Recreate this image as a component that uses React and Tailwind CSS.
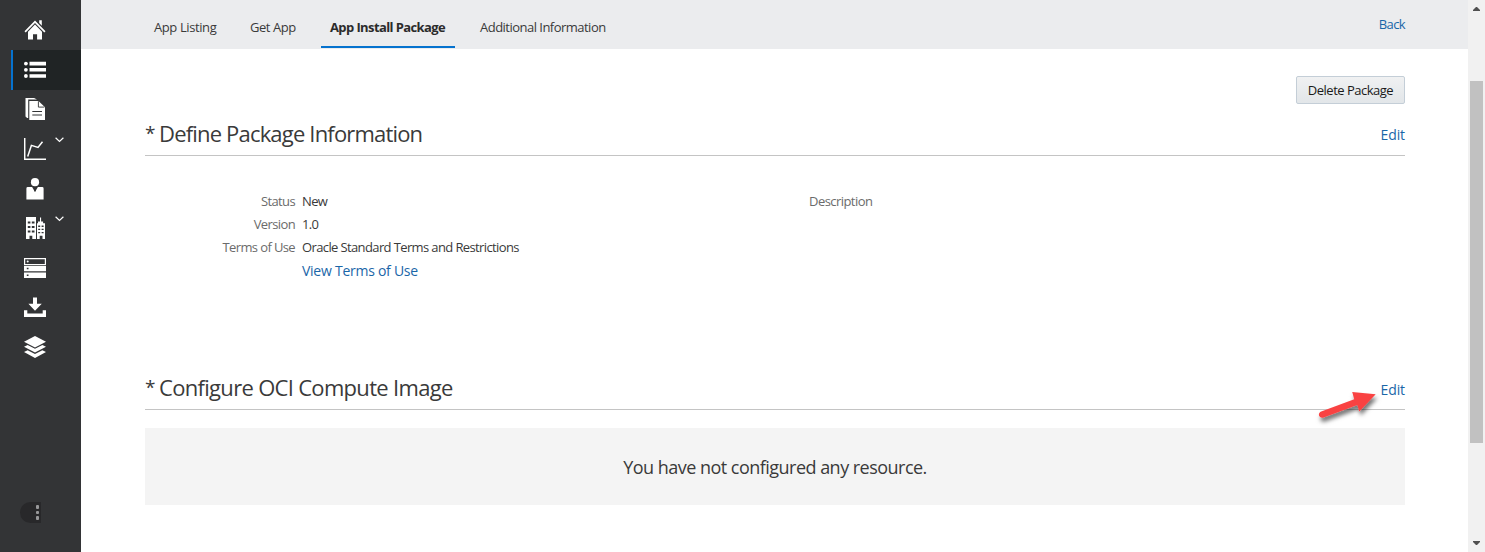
const HomeIcon = () => (
  <svg width="22" height="22" viewBox="0 0 22 22" fill="#fff">
    <path d="M11 1.5 21.5 12.3 20.3 13.4 11 4 1.7 13.4.5 12.3zM15.2 1.3h2.6v5.4l-2.6-2.6z" />
    <path d="M4 12.7 11 5.6l7 7.1V20.5h-4.9v-5.2H9v5.2H4z" />
  </svg>
);

const ListIcon = () => (
  <svg width="22" height="22" viewBox="0 0 22 22" fill="#fff">
    <circle cx="1.9" cy="4.6" r="1.9" /><circle cx="1.9" cy="10.8" r="1.9" /><circle cx="1.9" cy="17" r="1.9" />
    <path d="M5.5 2.8H22v3.6H5.5zM5.5 9H22v3.6H5.5zM5.5 15.2H22v3.6H5.5z" />
  </svg>
);

const DocsIcon = () => (
  <svg width="22" height="22" viewBox="0 0 22 22">
    <path d="M1.5 0h8.6L13 1.6H4.2V20H3.1L1.5 18.6z" fill="#fff" />
    <path d="M5.3 3h9.2l6.5 6.2V22H5.3z" fill="#fff" />
    <path d="M14.4 3.2v5.9h6" fill="none" stroke="#333436" strokeWidth=".9" />
    <path d="M8.3 13.5H18M8.3 17H18" stroke="#333436" strokeWidth="1" />
  </svg>
);

const ChartIcon = () => (
  <svg width="22" height="22" viewBox="0 0 22 22" fill="none" stroke="#fff">
    <path d="M.7 0v21.2H22" strokeWidth="1.5" />
    <path d="m3.7 18.4 3.7-11L14 9.5l4.5-5.8" strokeWidth="1.5" />
  </svg>
);

const PersonIcon = () => (
  <svg width="22" height="22" viewBox="0 0 22 22" fill="#fff">
    <circle cx="11" cy="4.2" r="4.1" />
    <path d="M3.8 9h4.3L11 14l2.9-5h4.3q1.4 0 1.4 1.4V21.4H2.4V10.4Q2.4 9 3.8 9z" />
    <path d="M10.1 9h1.8l-.5 1.2.5 2.3-.9 1.2-.9-1.2.5-2.3z" fill="#333436" />
  </svg>
);

const BuildingIcon = () => (
  <svg width="22" height="22" viewBox="0 0 22 22" fill="#fff">
    <path d="M2 0h10v22H8.3v-3.2H5.5V22H2z" />
    <path d="M13 6.3h1V4.5h2V.5h1.1v4h2v1.8H21V22h-2.5v-3.2h-2.8V22H13z" />
    <path d="M3.8 4.4h2.6v2H3.8zm4 0h2.7v2H7.8zm-4 4.6h2.6v2H3.8zm4 0h2.7v2H7.8zm-4 4.5h2.6v2H3.8zm4 0h2.7v2H7.8zM14.2 8.6h2v1.3h-2zm3.4 0h2v1.3h-2zm-3.4 3.2h2v1.3h-2zm3.4 0h2v1.3h-2zm-3.4 3.2h2v1.3h-2zm3.4 0h2v1.3h-2z" fill="#333436" />
  </svg>
);

const ServerIcon = () => (
  <svg width="22" height="22" viewBox="0 0 22 22" fill="#fff">
    <path d="M.6 1.6h20.8v5.9H.6z" fill="none" stroke="#fff" strokeWidth="1.2" />
    <path d="M0 8.8h22v5.4H0zM0 15.4h22V21H0z" />
    <circle cx="3.7" cy="4.6" r="1" />
    <path d="M2.8 10.8h1.7v1.5H2.8zm0 6.6h1.7v1.5H2.8z" fill="#333436" />
  </svg>
);

const DownloadIcon = () => (
  <svg width="22" height="22" viewBox="0 0 22 22" fill="#fff">
    <path d="M9 1.5h4v6.3h4.8L11 14.7 4.4 7.8H9z" />
    <path d="M0 14.3h3.3v3.2h15.4v-3.2H22v6.6H0z" />
  </svg>
);

const LayersIcon = () => (
  <svg width="22" height="22" viewBox="0 0 22 22" fill="#fff">
    <path d="m11 0 11 5.7-11 5.7L0 5.7z" />
    <path d="m0 10.7 3.6-1.8 7.4 3.8 7.4-3.8 3.6 1.8-11 5.8z" />
    <path d="m0 16 3.6-1.8L11 18l7.4-3.8L22 16l-11 5.9z" />
  </svg>
);

const NAV = [
  { icon: HomeIcon },
  { icon: ListIcon, active: true },
  { icon: DocsIcon },
  { icon: ChartIcon, menu: true },
  { icon: PersonIcon },
  { icon: BuildingIcon, menu: true },
  { icon: ServerIcon },
  { icon: DownloadIcon },
  { icon: LayersIcon },
];

function Sidebar() {
  return (
    <nav className="flex w-[81px] shrink-0 flex-col bg-[#333436] pt-[10px]">
      {NAV.map(({ icon: Icon, active, menu }, i) => (
        <div
          key={i}
          className={
            active
              ? "ml-[11px] flex h-10 items-center border-l-2 border-[#0572ce] bg-[#202425] pl-[11px]"
              : "ml-[11px] flex h-[39.6px] items-center pl-[13px]"
          }
        >
          <Icon />
          {menu && (
            <svg className="mb-[18px] ml-[8.5px]" width="9" height="6" viewBox="0 0 9 6" fill="none" stroke="#fff" strokeWidth="1.2">
              <path d="m.6.8 3.9 3.6L8.4.8" />
            </svg>
          )}
        </div>
      ))}
      <div className="mt-auto mb-[29px] ml-5 flex h-[21px] w-[21px] flex-col items-end justify-center gap-[2px] rounded-l-full bg-[#28282a] pr-[2px]">
        <span className="size-[3.5px] rounded-[1px] bg-[#98989a]" />
        <span className="size-[3.5px] rounded-[1px] bg-[#98989a]" />
        <span className="size-[3.5px] rounded-[1px] bg-[#98989a]" />
      </div>
    </nav>
  );
}

function Header() {
  return (
    <header className="flex h-[49px] items-start bg-[#ebecee] pr-[63px] pl-[64px] text-[13px] leading-5 text-[#3a3a3a]">
      <div className="flex h-12 pt-[17px]">
        <span className="ml-[9px] w-24 whitespace-nowrap tracking-[-0.4px]">App Listing</span>
        <span className="w-[71px] whitespace-nowrap tracking-[-0.45px]">Get App</span>
        <span className="h-[31px] w-[134px] border-b-2 border-[#0572ce] pl-[9px] font-bold whitespace-nowrap tracking-[-0.6px] text-[#2b2b2b]">App Install Package</span>
        <span className="ml-[25px] whitespace-nowrap tracking-[-0.52px]">Additional Information</span>
      </div>
      <a className="mt-[14px] ml-auto tracking-[-0.6px] text-[#1a66a8]">Back</a>
    </header>
  );
}

function SectionHeader({ title, titleClass, linkClass }) {
  return (
    <div className="flex h-[42px] items-start justify-between border-b border-[#c4c4c4]">
      <h2 className="flex gap-[6px] text-[22px] leading-[38px] text-[#3a3a3a]">
        <span className="w-[8px] text-[19px]">*</span>
        <span className={titleClass}>{title}</span>
      </h2>
      <a className={linkClass}>Edit</a>
    </div>
  );
}

function Field({ label, children }) {
  return (
    <div className="flex h-[23px] gap-[7px] text-[13px] leading-[23px] tracking-[-0.62px]">
      <span className="w-[150px] text-right text-[#6b6b6b]">{label}</span>
      <span className="whitespace-nowrap text-[#3a3a3a]">{children}</span>
    </div>
  );
}

function Arrow() {
  return (
    <svg className="absolute top-[386px] left-[1312px]" width="72" height="44" viewBox="0 0 72 44">
      <defs>
        <filter id="shadow" x="-20%" y="-20%" width="150%" height="170%">
          <feDropShadow dx="1.5" dy="4" stdDeviation="2" floodColor="#000" floodOpacity=".55" />
        </filter>
      </defs>
      <path d="m9.2 25.6 33-12.3-2-7.3 23.5 2.3-16.4 17.2-2-6.6-34.4 12.8c-4.7.5-5.2-5-1.7-6.1z" fill="#f94343" filter="url(#shadow)" />
    </svg>
  );
}

function Scrollbar() {
  return (
    <div className="flex w-[17px] shrink-0 flex-col items-center bg-[#f1f1f1]">
      <svg className="mt-[7px]" width="7" height="4" fill="#505050"><path d="M3 0h1l3 3v1H0V3z" /></svg>
      <div className="mt-[70px] h-[362px] w-[13px] bg-[#c1c1c1]" />
      <svg className="mt-auto mb-[7px]" width="7" height="4" fill="#505050"><path d="M0 0h7v1L4 4H3L0 1z" /></svg>
    </div>
  );
}

export default function App() {
  return (
    <div className="relative flex h-[552px] w-[1485px] overflow-hidden bg-white font-['Open_Sans',sans-serif]">
      <Sidebar />
      <main className="min-w-0 flex-1">
        <Header />
        <div className="flex flex-col pr-[63px] pl-[64px]">
          <button className="mt-[27px] mb-[10px] h-7 w-[109px] self-end rounded-[2px] border border-[#c4ced7] bg-linear-to-b from-[#f0f1f2] to-[#e2e6e9] pt-px text-[13px] tracking-[-0.5px] whitespace-nowrap text-[#1a1a1a]">
            Delete Package
          </button>
          <SectionHeader
            title="Define Package Information"
            titleClass="whitespace-nowrap tracking-[-0.82px]"
            linkClass="pt-[11px] text-sm leading-5 tracking-[-0.1px] text-[#1a66a8]"
          />
          <div className="flex h-[212px] pt-[34px]">
            <div className="flex w-[664px] flex-col">
              <Field label="Status">New</Field>
              <Field label="Version">1.0</Field>
              <Field label="Terms of Use">Oracle Standard Terms and Restrictions</Field>
              <a className="ml-[157px] text-sm leading-6 tracking-[-0.26px] text-[#1a66a8]">View Terms of Use</a>
            </div>
            <span className="text-[13px] leading-[23px] tracking-[-0.55px] text-[#6b6b6b]">Description</span>
          </div>
          <SectionHeader
            title="Configure OCI Compute Image"
            titleClass="whitespace-nowrap tracking-[-0.69px]"
            linkClass="pt-[12px] text-sm leading-5 tracking-[-0.1px] text-[#1a66a8]"
          />
          <div className="mt-[18px] flex h-[77px] items-center justify-center bg-[#f4f4f4] text-lg tracking-[-0.52px] text-[#3a3a3a]">
            You have not configured any resource.
          </div>
        </div>
      </main>
      <Scrollbar />
      <Arrow />
    </div>
  );
}
